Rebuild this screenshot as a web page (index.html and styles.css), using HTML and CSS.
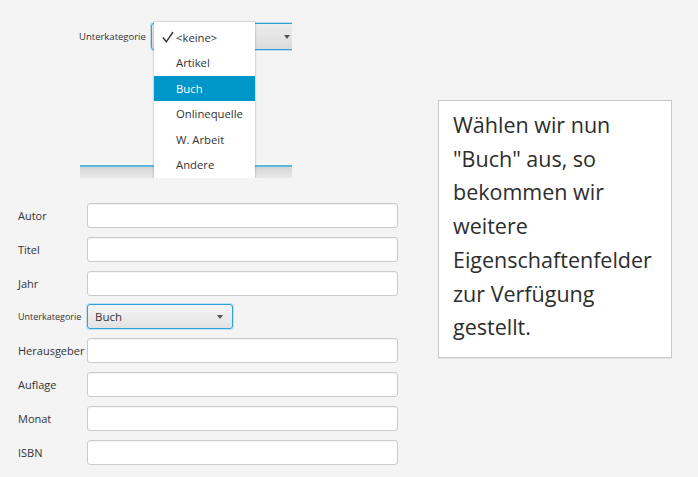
FILE: index.html
```html
<!DOCTYPE html>
<html lang="de">
<head>
<meta charset="utf-8">
<title>Unterkategorie</title>
<link rel="stylesheet" href="styles.css">
</head>
<body>
<div class="page">
  <div class="left">
    <div class="shot">
      <div class="shot-row">
        <span class="shot-label">Unterkategorie</span>
        <div class="shot-combo"><span class="arrow"></span></div>
      </div>
      <div class="shot-next"></div>
      <ul class="popup">
        <li class="item checked"><svg class="check" width="12" height="12" viewBox="0 0 12 12"><path d="M1 6.5 L4.3 10.8 L11 1" fill="none" stroke="#333" stroke-width="1.4"/></svg><span>&lt;keine&gt;</span></li>
        <li class="item">Artikel</li>
        <li class="item selected">Buch</li>
        <li class="item">Onlinequelle</li>
        <li class="item">W. Arbeit</li>
        <li class="item">Andere</li>
      </ul>
    </div>
    <div class="form">
      <div class="row"><span class="label">Autor</span><div class="field"></div></div>
      <div class="row"><span class="label">Titel</span><div class="field"></div></div>
      <div class="row"><span class="label">Jahr</span><div class="field"></div></div>
      <div class="row row-combo"><span class="label small">Unterkategorie</span><div class="combo"><span class="combo-text">Buch</span><span class="arrow"></span></div></div>
      <div class="row"><span class="label">Herausgeber</span><div class="field"></div></div>
      <div class="row"><span class="label">Auflage</span><div class="field"></div></div>
      <div class="row"><span class="label">Monat</span><div class="field"></div></div>
      <div class="row"><span class="label">ISBN</span><div class="field"></div></div>
    </div>
  </div>
  <div class="note">Wählen wir nun<br>"Buch" aus, so<br>bekommen wir<br>weitere<br>Eigenschaftenfelder<br>zur Verfügung<br>gestellt.</div>
</div>
</body>
</html>
```

FILE: styles.css
```css
html, body {
  margin: 0;
  padding: 0;
  background: #f4f4f4;
}
body {
  font-family: "Open Sans", "DejaVu Sans", sans-serif;
  color: #333;
  width: 698px;
  height: 477px;
  overflow: hidden;
}
.page {
  display: flex;
  align-items: flex-start;
  padding: 15px 0 0 18px;
}
.left {
  width: 380px;
  display: flex;
  flex-direction: column;
}

/* cropped screenshot */
.shot {
  position: relative;
  margin-left: 61px;
  width: 213px;
  height: 163px;
  overflow: hidden;
  display: flex;
  flex-direction: column;
}
.shot-row {
  display: flex;
  align-items: center;
  padding-top: 8px;
}
.shot-label {
  flex: none;
  width: 72px;
  font-size: 9.5px;
  color: #333;
}
.shot-combo {
  flex: none;
  width: 138px;
  height: 25px;
  border: 1px solid #2ea3d9;
  border-radius: 3px;
  box-shadow: 0 0 0 1px rgba(46, 163, 217, 0.3);
  background: linear-gradient(#ececec, #dcdcdc);
  display: flex;
  align-items: center;
  justify-content: flex-end;
  padding-right: 9px;
  box-sizing: content-box;
}
.shot-next {
  margin-top: auto;
  margin-left: 1px;
  height: 11px;
  border-top: 2px solid #5cb7e0;
  background: linear-gradient(#d6d6d6, #e9e9e9);
}
.popup {
  position: absolute;
  left: 75px;
  top: 7px;
  width: 101px;
  height: 170px;
  margin: 0;
  padding: 2.5px 0 0 0;
  list-style: none;
  background: #fff;
  box-shadow: 0 0 2px rgba(0, 0, 0, 0.35);
  box-sizing: border-box;
}
.item {
  height: 25.5px;
  display: flex;
  align-items: center;
  padding-left: 22px;
  font-size: 11.3px;
  color: #333;
}
.item.checked {
  padding-left: 8px;
}
.check {
  margin-right: 2px;
  flex: none;
}
.item.selected {
  background: #0096c9;
  color: #fff;
}

/* form */
.form {
  margin-top: 25px;
  display: flex;
  flex-direction: column;
  gap: 9px;
}
.row {
  display: flex;
  align-items: center;
  height: 25px;
}
.row-combo {
  margin-top: -1px;
}
.label {
  width: 69px;
  flex: none;
  font-size: 11px;
  color: #333;
}
.label.small {
  font-size: 9px;
}
.field {
  width: 311px;
  height: 25px;
  box-sizing: border-box;
  background: #fff;
  border: 1px solid #cbcbcb;
  border-radius: 3px;
  box-shadow: inset 0 1px 1px rgba(0, 0, 0, 0.05);
}
.combo {
  width: 146px;
  height: 25px;
  box-sizing: border-box;
  border: 1px solid #2ea3d9;
  border-radius: 3px;
  box-shadow: 0 0 0 1px rgba(46, 163, 217, 0.25);
  background: linear-gradient(#f6f6f6, #e2e2e2);
  display: flex;
  align-items: center;
  padding: 0 9px 0 7px;
}
.combo-text {
  flex: 1;
  font-size: 11.5px;
  color: #333;
}
.arrow {
  width: 0;
  height: 0;
  border-left: 3.5px solid transparent;
  border-right: 3.5px solid transparent;
  border-top: 4px solid #555;
}

/* note */
.note {
  margin: 85px 0 0 40px;
  width: 234px;
  height: 258px;
  box-sizing: border-box;
  background: #fff;
  border: 1px solid #c9c9c9;
  box-shadow: 0 1px 1px rgba(0, 0, 0, 0.06);
  padding: 7px 0 0 14px;
  font-size: 21.5px;
  line-height: 33.7px;
  color: #2d2d2d;
}
```
